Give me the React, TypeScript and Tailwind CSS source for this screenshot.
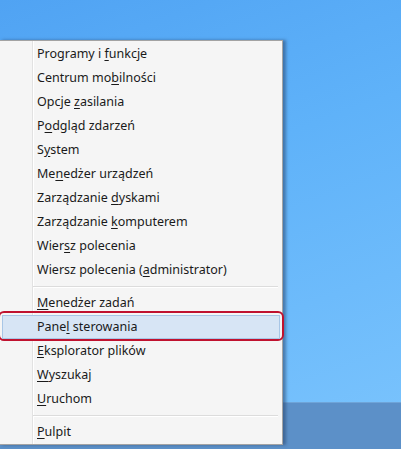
import React from 'react'

// Win+X menu (Windows 8, PL) nad pulpitem

type Item = { pre: string; key: string; post: string; active?: boolean }

const groupA: Item[] = [
  { pre: 'Programy i ', key: 'f', post: 'unkcje' },
  { pre: 'Centrum mo', key: 'b', post: 'ilności' },
  { pre: 'Opcje ', key: 'z', post: 'asilania' },
  { pre: 'P', key: 'o', post: 'dgląd zdarzeń' },
  { pre: 'S', key: 'y', post: 'stem' },
  { pre: 'Me', key: 'n', post: 'edżer urządzeń' },
  { pre: 'Zarządzanie ', key: 'd', post: 'yskami' },
  { pre: 'Zarządzanie ', key: 'k', post: 'omputerem' },
  { pre: 'Wier', key: 's', post: 'z polecenia' },
  { pre: 'Wiersz polecenia (', key: 'a', post: 'dministrator)' },
]

const groupB: Item[] = [
  { pre: '', key: 'M', post: 'enedżer zadań' },
  { pre: 'Pane', key: 'l', post: ' sterowania', active: true },
  { pre: '', key: 'E', post: 'ksplorator plików' },
  { pre: '', key: 'W', post: 'yszukaj' },
  { pre: '', key: 'U', post: 'ruchom' },
]

const groupC: Item[] = [{ pre: '', key: 'P', post: 'ulpit' }]

const MenuItem = ({ item }: { item: Item }) => (
  <div
    className={`h-[24px] flex items-center ${
      item.active
        ? 'relative z-10 mx-[2px] pl-[34px] bg-[#d7e5f5] border border-[#a8c6e6]'
        : 'pl-[37px]'
    }`}
  >
    <span>
      {item.pre}
      <span className="underline underline-offset-2">{item.key}</span>
      {item.post}
    </span>
  </div>
)

const Separator = () => (
  <div className="h-[9px] flex items-center pl-[33px] pr-[4px]">
    <div className="w-full h-[2px] border-t border-[#dcdcdc] border-b border-b-white" />
  </div>
)

export default function App() {
  return (
    <div className="relative w-[401px] h-[449px] overflow-hidden bg-[linear-gradient(160deg,#50a3f3_0%,#5fb2f9_40%,#7bc4fd_100%)]">
      {/* pasek zadań */}
      <div className="absolute left-0 right-0 bottom-0 h-[47px] bg-[#5c90c8] border-t border-[#6fa4d8]" />

      {/* menu */}
      <div
        className="absolute left-[-1px] top-[40px] w-[284px] h-[405px] pt-[1px] bg-[#f5f5f5] border border-[#a3a3a3] shadow-[3px_0_3px_rgba(40,70,110,0.55)] text-[12.5px] text-[#1a1a1a]"
        style={{ fontFamily: '"Noto Sans", "Open Sans", sans-serif' }}
      >
        <div className="absolute left-[32px] top-0 bottom-0 w-[2px] border-l border-[#e2e2e2] border-r border-r-white" />
        <div className="relative">
          {groupA.map((it) => (
            <MenuItem key={it.pre + it.key} item={it} />
          ))}
          <Separator />
          {groupB.map((it) => (
            <MenuItem key={it.pre + it.key} item={it} />
          ))}
          <Separator />
          {groupC.map((it) => (
            <MenuItem key={it.pre + it.key} item={it} />
          ))}
        </div>
      </div>

      {/* czerwone obramowanie */}
      <div className="absolute left-[-2px] top-[311px] w-[286px] h-[30px] border-2 border-[#c0122f] rounded-[6px]" />
    </div>
  )
}
